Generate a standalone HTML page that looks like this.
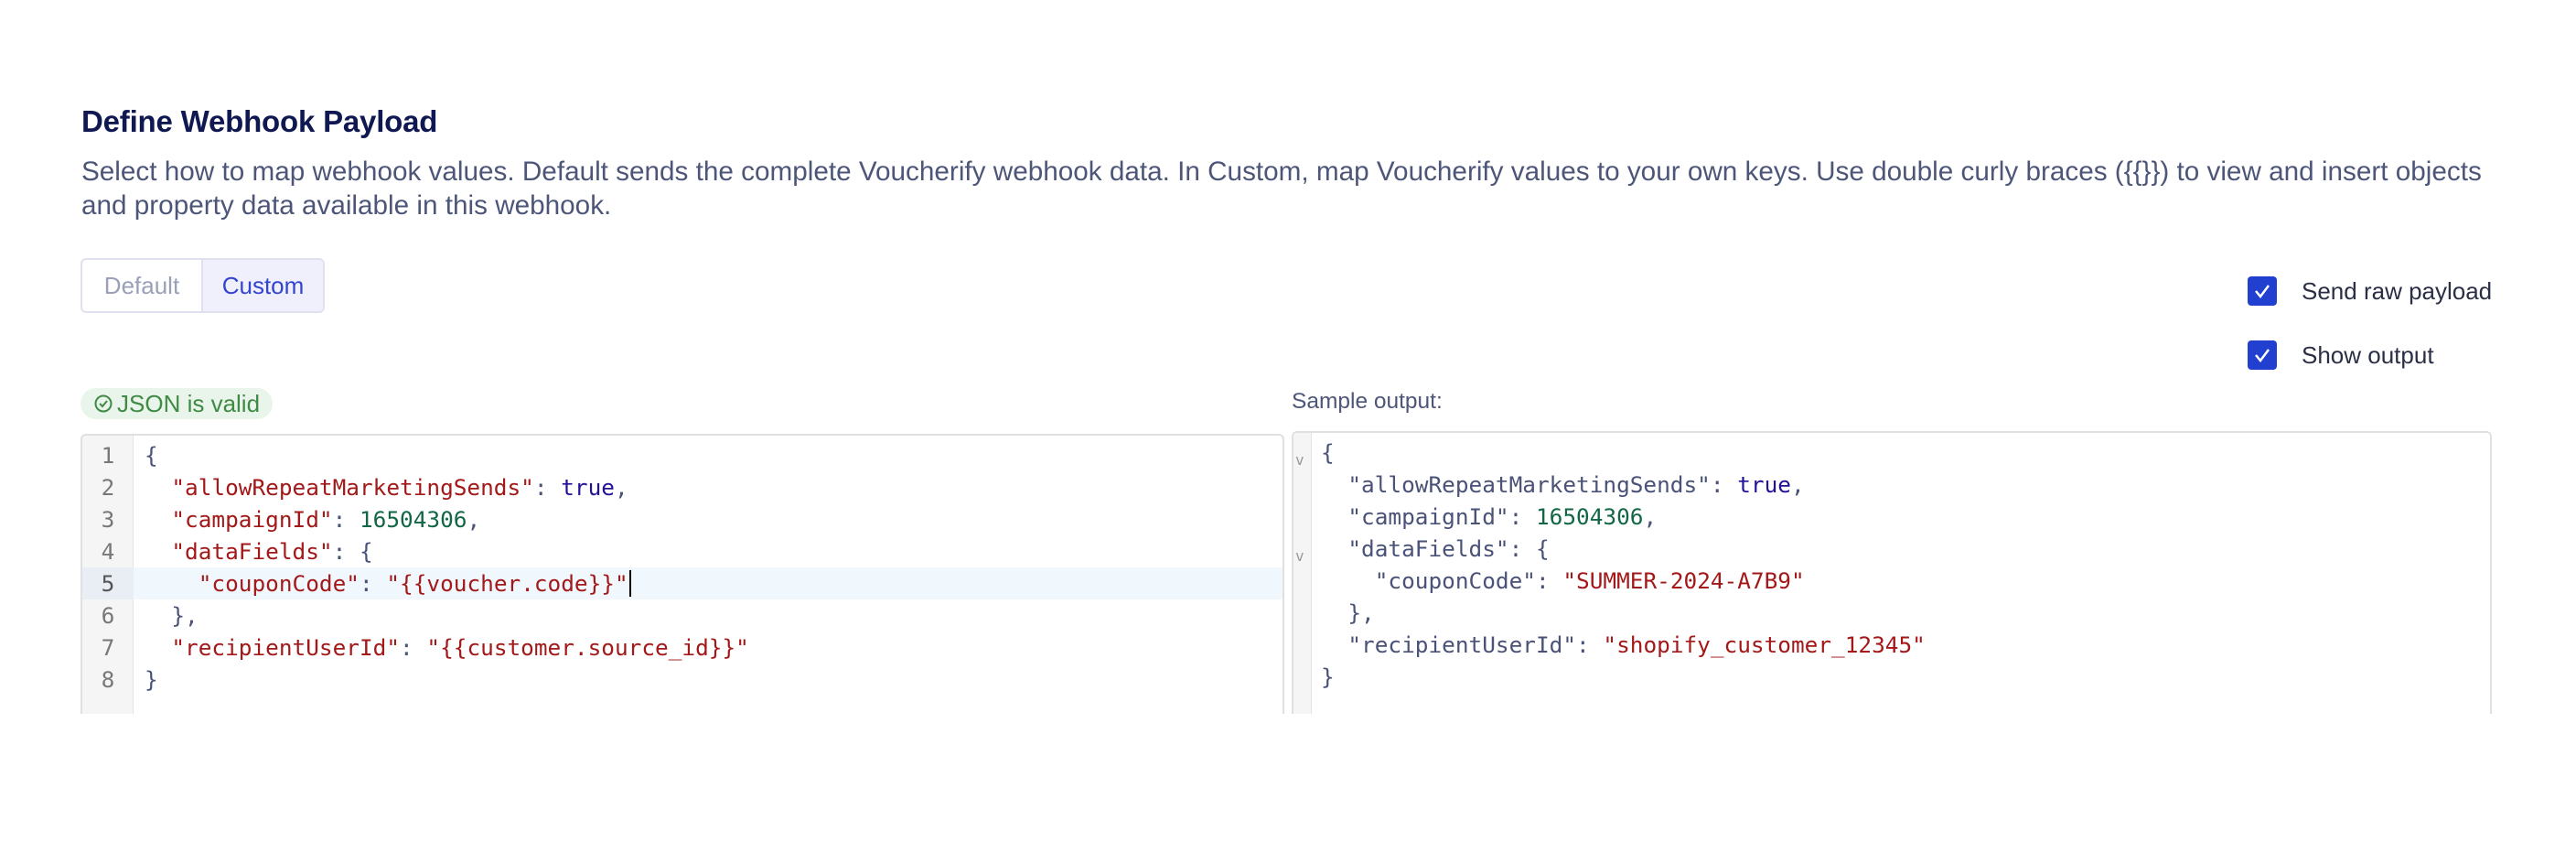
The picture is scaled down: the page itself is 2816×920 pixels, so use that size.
<!DOCTYPE html>
<html><head><meta charset="utf-8"><style>
*{margin:0;padding:0;box-sizing:border-box}
body{width:2816px;height:920px;background:#fff;font-family:"Liberation Sans",sans-serif;position:relative;overflow:hidden}
.abs{position:absolute}
h1{position:absolute;left:89px;top:114px;font-size:33px;font-weight:bold;color:#0f1850;letter-spacing:-0.2px}
.desc{left:89px;top:169px;font-size:29.7px;line-height:37px;color:#4d5678;width:2720px;white-space:nowrap}
.toggle{left:88px;top:282px;width:267px;height:60px;border:2px solid #dfe2ee;border-radius:6px;display:flex;overflow:hidden;font-size:26px}
.toggle div{display:flex;align-items:center;justify-content:center}
.cb{width:32px;height:32px;background:#2140d0;border-radius:4px}
.cbl{font-size:26px;color:#2a2f45}
.badge{left:88px;top:424px;width:210px;height:34px;background:#e9f5ea;border-radius:17px;color:#3f8a44;font-size:26px;display:flex;align-items:center;padding-left:14px;white-space:nowrap}
.ed{border:2px solid #e0e0e0;border-bottom:none;border-radius:6px 6px 0 0;overflow:hidden}
.code{font-family:"DejaVu Sans Mono","Liberation Mono",monospace;font-size:24.4px;color:#4a5278}
.ln{height:35px;line-height:35px;white-space:pre}
.k{color:#a31818}.s{color:#a31818}.b{color:#221199}.n{color:#116644}.rk{color:#4a5278}
</style></head><body>
<h1>Define Webhook Payload</h1>
<div class="abs desc">Select how to map webhook values. Default sends the complete Voucherify webhook data. In Custom, map Voucherify values to your own keys. Use double curly braces ({{}}) to view and insert objects<br>and property data available in this webhook.</div>
<div class="abs toggle"><div style="width:130px;color:#9aa0b8">Default</div><div style="flex:1;background:#eff0fb;color:#3344d0;border-left:2px solid #dfe2ee">Custom</div></div>
<div class="abs cb" style="left:2457px;top:302px"><svg width="32" height="32"><path d="M9 16l5 6 9-12" stroke="#fff" stroke-width="2.5" fill="none"/></svg></div>
<div class="abs cbl" style="left:2516px;top:303px">Send raw payload</div>
<div class="abs cb" style="left:2457px;top:372px"><svg width="32" height="32"><path d="M9 16l5 6 9-12" stroke="#fff" stroke-width="2.5" fill="none"/></svg></div>
<div class="abs cbl" style="left:2516px;top:373px">Show output</div>
<div class="abs badge"><svg width="22" height="22" style="margin-right:4px;flex:none"><circle cx="11" cy="11" r="8.5" stroke="#3f8a44" stroke-width="2" fill="none"/><path d="M7 11l3 3 5-6" stroke="#3f8a44" stroke-width="2" fill="none"/></svg>JSON is valid</div>
<div class="abs" style="left:1412px;top:425px;font-size:24.5px;color:#4d5678">Sample output:</div>

<div class="abs ed" style="left:88px;top:474px;width:1316px;height:306px">
<div class="abs" style="left:0;top:0;width:56px;height:306px;background:#f5f5f5;border-right:1px solid #e4e4e4"></div>
<div class="abs" style="left:0;top:144px;width:1316px;height:35px;background:#f0f7fd"></div>
<div class="abs" style="left:0;top:144px;width:56px;height:35px;background:#e8eef3"></div>
<div class="abs code" style="left:0;top:4px;width:56px;text-align:center;color:#777"><div class="ln">1</div><div class="ln">2</div><div class="ln">3</div><div class="ln">4</div><div class="ln" style="color:#555">5</div><div class="ln">6</div><div class="ln">7</div><div class="ln">8</div></div>
<div class="abs code" style="left:68px;top:4px">
<div class="ln">{</div>
<div class="ln">  <span class="k">"allowRepeatMarketingSends"</span>: <span class="b">true</span>,</div>
<div class="ln">  <span class="k">"campaignId"</span>: <span class="n">16504306</span>,</div>
<div class="ln">  <span class="k">"dataFields"</span>: {</div>
<div class="ln">    <span class="k">"couponCode"</span>: <span class="s">"{{voucher.code}}"</span><span style="border-left:2px solid #000;margin-left:1px"></span></div>
<div class="ln">  },</div>
<div class="ln">  <span class="k">"recipientUserId"</span>: <span class="s">"{{customer.source_id}}"</span></div>
<div class="ln">}</div>
</div></div>

<div class="abs ed" style="left:1412px;top:471px;width:1312px;height:309px">
<div class="abs" style="left:0;top:0;width:20px;height:309px;background:#f5f5f5;border-right:1px solid #e4e4e4"></div>
<div class="abs code" style="left:2px;top:12px;font-size:16px;color:#999;line-height:35px"><div>v</div><div style="margin-top:70px">v</div></div>
<div class="abs code" style="left:30px;top:4px">
<div class="ln">{</div>
<div class="ln">  <span class="rk">"allowRepeatMarketingSends"</span>: <span class="b">true</span>,</div>
<div class="ln">  <span class="rk">"campaignId"</span>: <span class="n">16504306</span>,</div>
<div class="ln">  <span class="rk">"dataFields"</span>: {</div>
<div class="ln">    <span class="rk">"couponCode"</span>: <span class="s">"SUMMER-2024-A7B9"</span></div>
<div class="ln">  },</div>
<div class="ln">  <span class="rk">"recipientUserId"</span>: <span class="s">"shopify_customer_12345"</span></div>
<div class="ln">}</div>
</div></div>
</body></html>
